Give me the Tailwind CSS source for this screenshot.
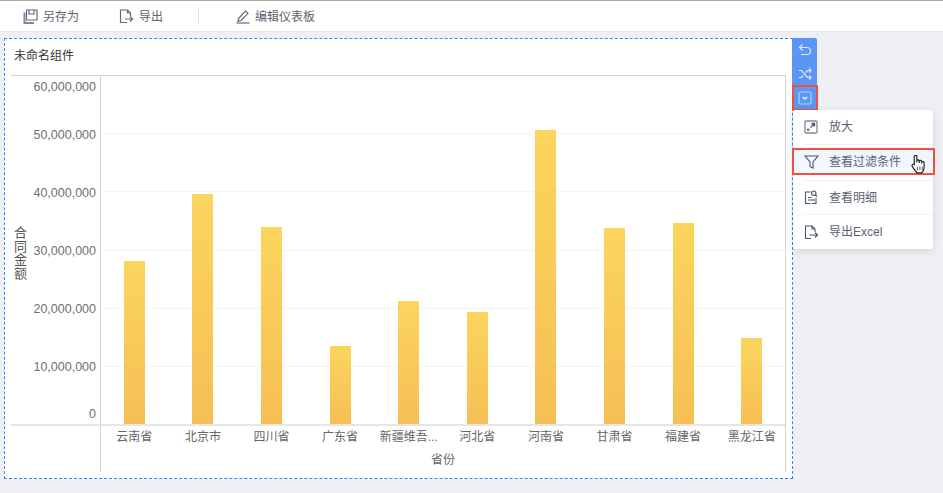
<!DOCTYPE html>
<html lang="zh">
<head>
  <meta charset="UTF-8">
  <title>编辑仪表板</title>
  <script src="https://cdn.jsdelivr.net/npm/@tailwindcss/browser@4"></script>
</head>
<body class="bg-[#eef0f4] font-['Liberation_Sans','Noto_Sans_CJK_SC',sans-serif] text-[12px] text-[#666]">
<div class="relative w-[943px] h-[493px] overflow-hidden">

  <!-- toolbar -->
  <div class="h-[32px] bg-white border-t border-[#aaa] border-b-[#e8e9ec] border-b flex items-center text-[#5c6370]">
    <div class="flex items-center gap-[5px] ml-[23px] w-[96px] pt-[1px]">
      <svg class="w-[15px] h-[15px]" viewBox="0 0 15 15" fill="none" stroke="#5f6b80" stroke-width="1.200"><path d="M3.500 1h10.500v10H3.500z"/><path d="M6 1v4h5V1"/><path d="M1.500 3.500V14H11" stroke-width="2" stroke="#7d8899"/></svg>
      <span>另存为</span>
    </div>
    <div class="flex items-center gap-[5px] w-[79px] pt-[1px]">
      <svg class="w-[15px] h-[15px]" viewBox="0 0 15 15" fill="none" stroke="#5f6b80" stroke-width="1.200"><path d="M8 13.500H1.500V1H8.500l3 3v3"/><path d="M8.500 1v3h3"/><path d="M6 10h7.500M11 7.500l2.500 2.500-2.500 2.500"/></svg>
      <span>导出</span>
    </div>
    <div class="w-px h-[16px] bg-[#e4e6ea]"></div>
    <div class="flex items-center gap-[5px] ml-[37px] pt-[1px]">
      <svg class="w-[14px] h-[15px]" viewBox="0 0 14 15" fill="none" stroke="#5f6b80" stroke-width="1.200"><path d="M2.500 9.500 9.500 2l2.500 2.300-7 7.200-3 .7z"/><path d="M.500 14h13"/></svg>
      <span>编辑仪表板</span>
    </div>
  </div>

  <div class="flex items-start pt-[6px] pl-[4px]">
    <!-- widget -->
    <div class="w-[789px] h-[441px] bg-white border border-dashed border-[#2f86f6] pl-[6px] pr-[6px] shrink-0">
      <div class="h-[36px] pl-[3px] pt-[9px] leading-[16px] text-[#333]">未命名组件</div>
      <div class="w-[775px] h-[397px] border-t border-r border-[#d2d2d2]">
        <div class="flex h-[348px]">
          <div class="w-[90px] border-r border-[#d2d2d2] flex shrink-0">
            <div class="w-[22px] pl-[3px] pt-[150px] text-[13px] leading-[13.500px] text-[#555] break-all">合同金额</div>
            <div class="flex-1 pr-[4px] text-right text-[12.500px] leading-[16px] text-[#707070]">
              <div class="mt-[3px]">60,000,000</div>
              <div class="mt-[32px]">50,000,000</div>
              <div class="mt-[42px]">40,000,000</div>
              <div class="mt-[42px]">30,000,000</div>
              <div class="mt-[42px]">20,000,000</div>
              <div class="mt-[42px]">10,000,000</div>
              <div class="mt-[31px]">0</div>
            </div>
          </div>
          <div class="relative flex-1">
            <div class="absolute inset-0 flex flex-col">
              <div class="flex-1 border-b border-[#f4f4f4]"></div>
              <div class="flex-1 border-b border-[#f4f4f4]"></div>
              <div class="flex-1 border-b border-[#f4f4f4]"></div>
              <div class="flex-1 border-b border-[#f4f4f4]"></div>
              <div class="flex-1 border-b border-[#f4f4f4]"></div>
              <div class="flex-1"></div>
            </div>
            <div class="absolute top-0 bottom-0 -left-px -right-px grid grid-cols-10 items-end justify-items-center">
              <div class="w-[21px] bg-linear-to-b from-[#fbd55d] to-[#f6bf55]" style="height:163px"></div>
              <div class="w-[21px] bg-linear-to-b from-[#fbd55d] to-[#f6bf55]" style="height:230px"></div>
              <div class="w-[21px] bg-linear-to-b from-[#fbd55d] to-[#f6bf55]" style="height:197px"></div>
              <div class="w-[21px] bg-linear-to-b from-[#fbd55d] to-[#f6bf55]" style="height:78px"></div>
              <div class="w-[21px] bg-linear-to-b from-[#fbd55d] to-[#f6bf55]" style="height:123px"></div>
              <div class="w-[21px] bg-linear-to-b from-[#fbd55d] to-[#f6bf55]" style="height:112px"></div>
              <div class="w-[21px] bg-linear-to-b from-[#fbd55d] to-[#f6bf55]" style="height:294px"></div>
              <div class="w-[21px] bg-linear-to-b from-[#fbd55d] to-[#f6bf55]" style="height:196px"></div>
              <div class="w-[21px] bg-linear-to-b from-[#fbd55d] to-[#f6bf55]" style="height:201px"></div>
              <div class="w-[21px] bg-linear-to-b from-[#fbd55d] to-[#f6bf55]" style="height:86px"></div>
            </div>
          </div>
        </div>
        <div class="flex h-[48px] border-t-2 border-[#e6e6e6]">
          <div class="w-[90px] border-r border-[#d2d2d2] shrink-0"></div>
          <div class="flex-1">
            <div class="grid grid-cols-10 text-center pt-[3px] leading-[16px] -ml-px -mr-px">
              <div>云南省</div><div>北京市</div><div>四川省</div><div>广东省</div><div>新疆维吾...</div>
              <div>河北省</div><div>河南省</div><div>甘肃省</div><div>福建省</div><div>黑龙江省</div>
            </div>
            <div class="text-center mt-[7px] leading-[16px]">省份</div>
          </div>
        </div>
      </div>
    </div>

    <!-- widget actions -->
    <div class="w-[25px] -ml-px shrink-0 bg-[#5b96f5] rounded-tr-[2px] flex flex-col">
      <div class="h-[24px] flex items-center justify-center">
        <svg class="w-[14px] h-[14px]" viewBox="0 0 14 14" fill="none" stroke="#dce8fd" stroke-width="1.200"><path d="M4.500 1.500 1.500 4.500l3 3"/><path d="M1.500 4.500h7.500a3.200 3.200 0 0 1 0 7H3"/></svg>
      </div>
      <div class="h-[23px] flex items-center justify-center">
        <svg class="w-[14px] h-[14px]" viewBox="0 0 14 14" fill="none" stroke="#dce8fd" stroke-width="1.200"><path d="M1 3.500h2.500l6 7H13M1 10.500h2.500l1.800-2.200M7.500 5.700l2-2.200H13"/><path d="M11.200 1.500 13 3.500l-1.800 2M11.200 8.500l1.800 2-1.800 2"/></svg>
      </div>
      <div class="w-[26px] h-[26px] border-2 border-[#f2503f] flex items-center justify-center">
        <svg class="w-[14px] h-[14px]" viewBox="0 0 14 14" fill="none" stroke-width="1.200"><rect x="1" y="1" width="12" height="12" rx="1.500" stroke="#b5cffb"/><path d="M4.700 6 7 8l2.300-2" stroke="#fff"/></svg>
      </div>
    </div>
  </div>

  <!-- dropdown menu -->
  <div class="absolute left-[793px] top-[110px] w-[140px] h-[139px] bg-white rounded-[2px] shadow-[0_2px_8px_rgba(0,0,0,0.12)] text-[#5c6370]">
    <div class="h-[34px] flex items-center pl-[11px] gap-[11px]">
      <svg class="w-[14px] h-[14px]" viewBox="0 0 14 14" fill="none" stroke="#7d8899" stroke-width="1.300"><rect x="1" y="1" width="12" height="12" rx="1"/><path d="M6.500 7.500 10.500 3.500M7.500 3.500h3v3" stroke="#4b566a"/><path d="M3 8.500h2.500V11H3z" fill="#7d8899" stroke="none"/></svg>
      <span>放大</span>
    </div>
    <div class="ml-[10px] h-px bg-[#f0f1f3]"></div>
    <div class="h-[35px]"></div>
    <div class="ml-[10px] h-px bg-[#f0f1f3]"></div>
    <div class="h-[33px] flex items-center pl-[11px] gap-[10px]">
      <svg class="w-[15px] h-[15px]" viewBox="0 0 15 15" fill="none" stroke="#4b566a" stroke-width="1.100"><path d="M6.500 13.500H1.500V2H6.500"/><circle cx="9.800" cy="3.200" r="2.200"/><path d="M11.400 4.900l1.600 1.600M4 7.500h3.500M4 10h7"/><path d="M12 8v5.500H8"/></svg>
      <span>查看明细</span>
    </div>
    <div class="ml-[10px] h-px bg-[#f0f1f3]"></div>
    <div class="h-[34px] flex items-center pl-[11px] gap-[10px]">
      <svg class="w-[15px] h-[15px]" viewBox="0 0 15 15" fill="none" stroke="#4b566a" stroke-width="1.100"><path d="M7 13.500H1.500V1H8l3 3v3"/><path d="M8 1v3h3"/><path d="M5.500 10h8M11 7.500l2.500 2.500-2.500 2.500"/></svg>
      <span>导出Excel</span>
    </div>
  </div>

  <!-- highlighted menu item -->
  <div class="absolute left-[792px] top-[148px] w-[143px] h-[27px] bg-[#f1f6ff] border-2 border-[#f2503f] flex items-center pl-[10px] gap-[10px] text-[#5c6370]">
    <svg class="w-[15px] h-[15px]" viewBox="0 0 15 15" fill="none" stroke="#4b566a" stroke-width="1.100"><path d="M1 2h13L9 8v6L6 12.500V8z"/></svg>
    <span>查看过滤条件</span>
  </div>

  <!-- hand cursor -->
  <svg class="absolute left-[911px] top-[155px] w-[15px] h-[19px]" viewBox="1 1 13 18" fill="#fff" stroke="#222" stroke-width="1.100"><path d="M3.500 10V2.500a1.200 1.200 0 0 1 2.400 0V8V6.500a1.200 1.200 0 0 1 2.300 0V8.500V7a1.200 1.200 0 0 1 2.300 0v2V8a1.200 1.200 0 0 1 2.300 0v5c0 2.500-1.300 4-2.500 5H6c-1-1.300-3-4-4.500-6.500-.6-1.300 1-2.300 2-1.500z"/><path d="M6.500 12v3.500M8.800 12v3.500M11 12v3.500" stroke="#777"/></svg>
</div>
</body>
</html>
